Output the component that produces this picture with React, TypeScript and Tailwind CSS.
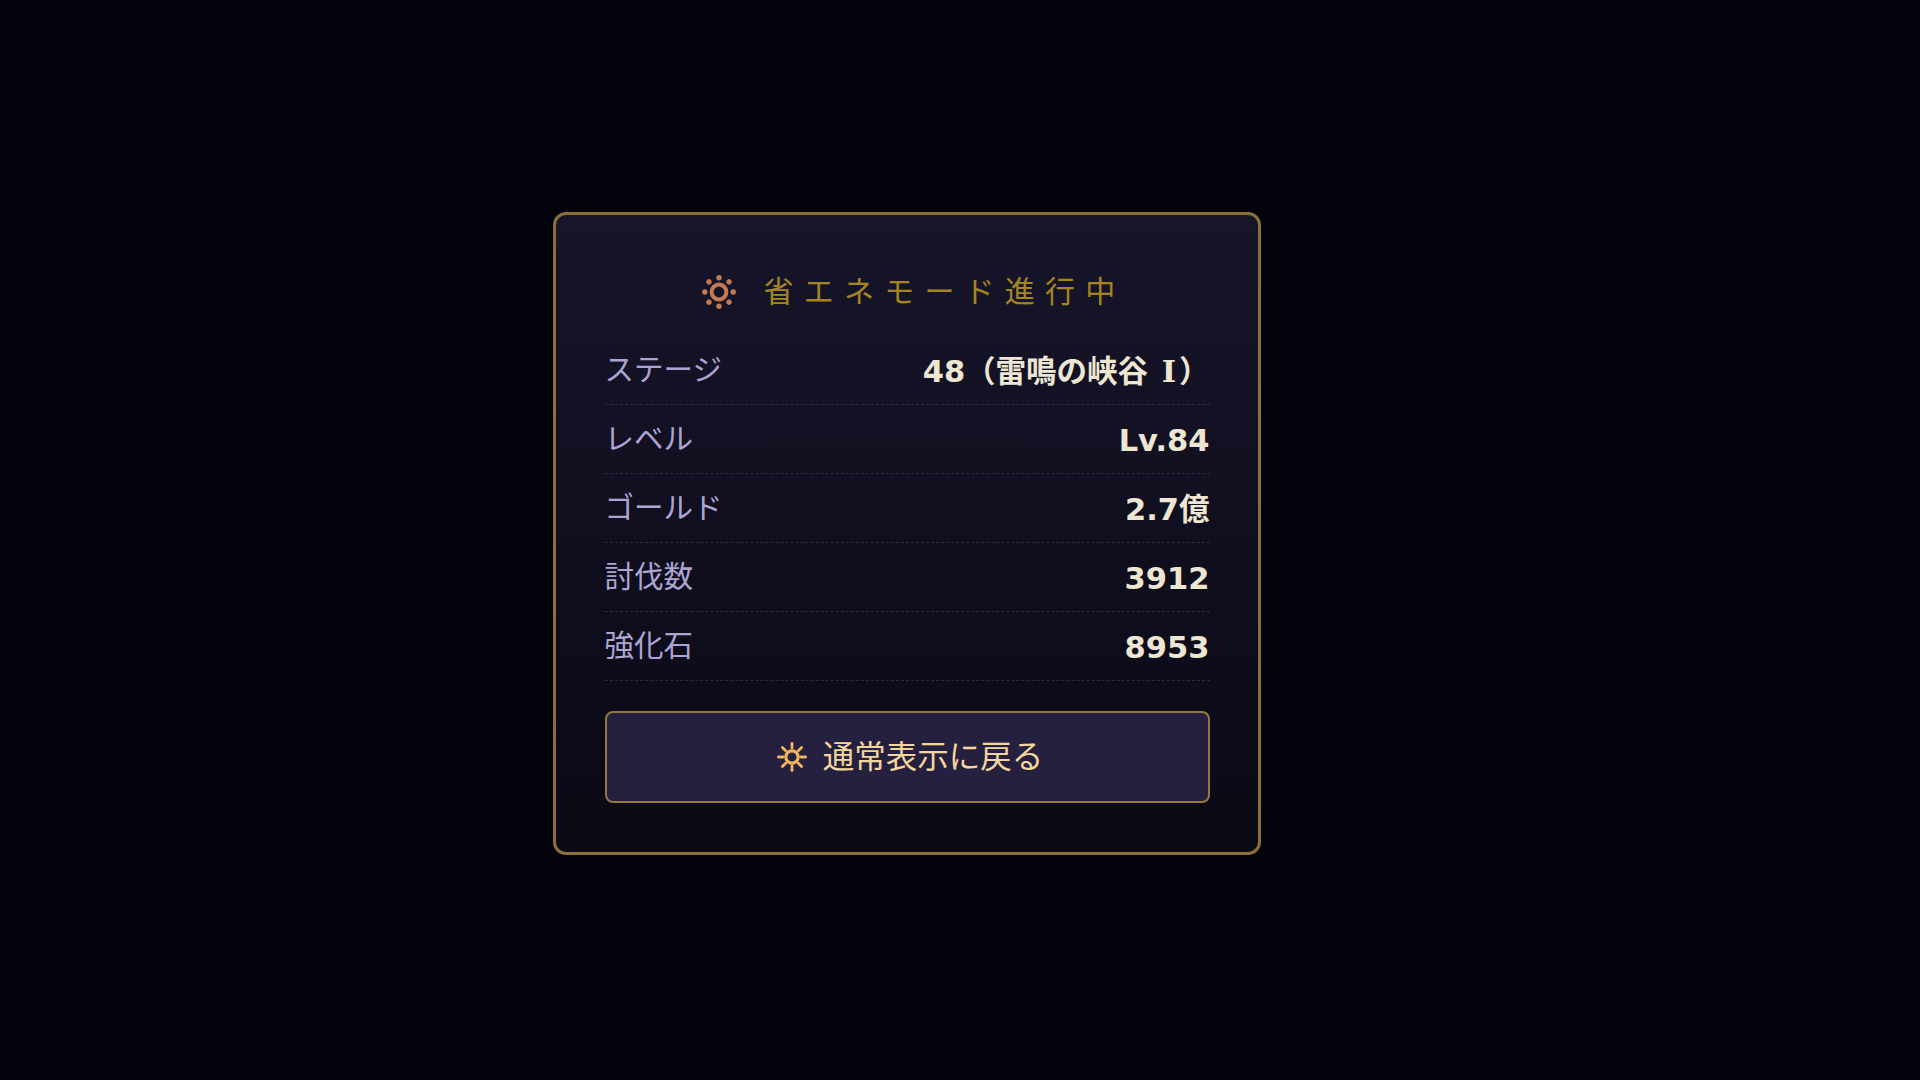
const rows = [
  { label: "ステージ", value: "48（雷鳴の峡谷 ", suffix: "I", tail: "）" },
  { label: "レベル", value: "Lv.84" },
  { label: "ゴールド", value: "2.7億" },
  { label: "討伐数", value: "3912" },
  { label: "強化石", value: "8953" },
]

function DottedSun() {
  const dots = [0, 45, 90, 135, 180, 225, 270, 315]
  return (
    <svg width="36" height="36" viewBox="0 0 36 36" className="text-[#c47a52]" aria-hidden="true">
      <circle cx="18" cy="18" r="7.4" fill="none" stroke="currentColor" strokeWidth="4" />
      {dots.map((d) => (
        <circle key={d} cx="18" cy="3.8" r="2.7" fill="currentColor" transform={`rotate(${d} 18 18)`} />
      ))}
    </svg>
  )
}

function RaySun() {
  const rays = [0, 45, 90, 135, 180, 225, 270, 315]
  return (
    <svg width="30" height="30" viewBox="0 0 32 32" className="text-[#f3b65c]" aria-hidden="true">
      <circle cx="16" cy="16" r="6.6" fill="none" stroke="currentColor" strokeWidth="3.4" />
      {rays.map((d) => (
        <line
          key={d}
          x1="16"
          y1="1.5"
          x2="16"
          y2="6.5"
          stroke="currentColor"
          strokeWidth="3"
          strokeLinecap="round"
          transform={`rotate(${d} 16 16)`}
        />
      ))}
    </svg>
  )
}

export default function App() {
  return (
    <div className="flex h-[1080px] w-full items-center justify-center bg-[#03030b] pr-[107px] pb-[13px] font-['Noto_Sans_CJK_JP',sans-serif]">
      <div className="w-[708px] rounded-[13px] border-[3px] border-[#8a7038] bg-gradient-to-b from-[#17152a] to-[#0a0914] pt-[50px] pr-[48px] pb-[49px] pl-[49px]">
        {/* Title */}
        <div className="flex items-center justify-center gap-[27px] pb-[17px] pl-[12px]">
          <DottedSun />
          <h1 className="font-['Liberation_Serif','Noto_Sans_CJK_JP',serif] text-[30px] leading-[54px] font-normal tracking-[10.2px] text-[#a5851f]">
            省エネモード進行中
          </h1>
        </div>

        {/* Stats */}
        <div>
          {rows.map((row) => (
            <div
              key={row.label}
              className="flex h-[69px] items-center justify-between border-b border-dashed border-[#2b2a44]"
            >
              <span className="pb-[5px] text-[29.5px] text-[#aca5d3]">{row.label}</span>
              <span className="pt-[3px] font-['DejaVu_Sans','Noto_Sans_CJK_JP',sans-serif] text-[30.5px] font-bold text-[#ede6d2]">
                {row.value}
                {row.suffix && <span className="px-[3px] font-['DejaVu_Serif',serif]">{row.suffix}</span>}
                {row.tail}
              </span>
            </div>
          ))}
        </div>

        {/* Back button */}
        <button className="mt-[30px] flex h-[92px] w-full items-center justify-center gap-[16px] rounded-[8px] border-2 border-[#94793c] bg-[#252040] pl-[6px] text-[#f2d69c]">
          <RaySun />
          <span className="pb-[5px] text-[31.5px]">通常表示に戻る</span>
        </button>
      </div>
    </div>
  )
}
